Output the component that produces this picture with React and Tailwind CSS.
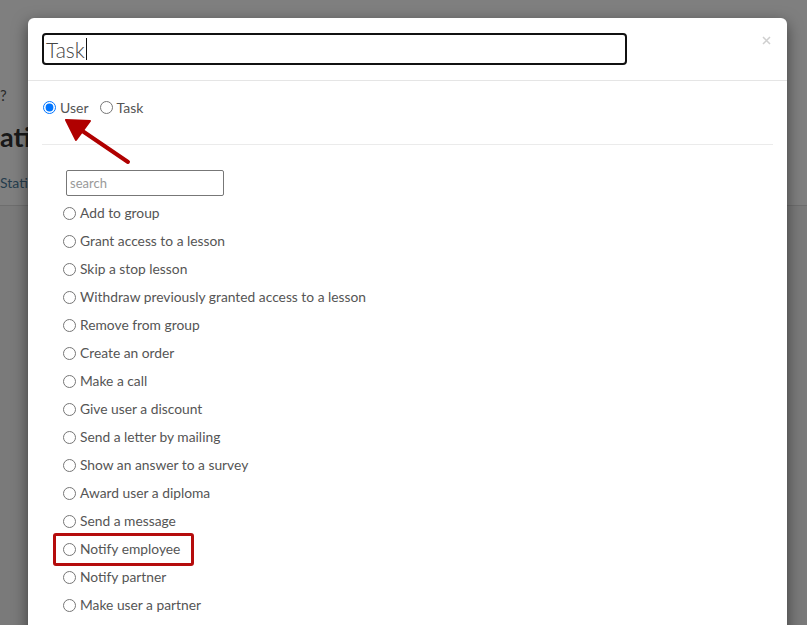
import React from "react";

const actions = [
  "Add to group",
  "Grant access to a lesson",
  "Skip a stop lesson",
  "Withdraw previously granted access to a lesson",
  "Remove from group",
  "Create an order",
  "Make a call",
  "Give user a discount",
  "Send a letter by mailing",
  "Show an answer to a survey",
  "Award user a diploma",
  "Send a message",
  "Notify employee",
  "Notify partner",
  "Make user a partner",
];

function Arrow() {
  return (
    <svg className="absolute left-[50px] top-[104px] pointer-events-none" width="90" height="70" viewBox="0 0 90 70">
      <line x1="78" y1="58" x2="28" y2="24" stroke="#b00000" strokeWidth="4" strokeLinecap="round" />
      <polygon points="16,16 40,17 26,36" fill="#b00000" stroke="#b00000" strokeWidth="2" strokeLinejoin="round" />
    </svg>
  );
}

export default function App() {
  return (
    <div className="relative w-[807px] h-[625px] overflow-hidden bg-[#f4f4f4] font-['Lato',sans-serif]">
      {/* page behind the dialog */}
      <div className="h-[206px] border-b border-[#dcdcdc] bg-white">
        <div className="pt-[84px] ml-0 text-[15px] text-[#555]">?</div>
        <div className="mt-[16px] ml-0 text-[27px] font-bold text-[#333] leading-none">ation</div>
        <div className="mt-[22px] ml-0 text-[14px] text-[#4a7a9a]">Statistics</div>
      </div>

      {/* backdrop */}
      <div className="absolute inset-0 bg-black/50">
        <div className="ml-[28px] mt-[18px] w-[759px] h-[640px] bg-white rounded-t-[6px] shadow-[0_5px_15px_rgba(0,0,0,0.5)]">
          <div className="flex items-start justify-between px-[14px] pt-[15px] pb-[15px] border-b border-[#e5e5e5]">
            <div className="w-[585px] h-[32px] border-2 border-[#111] rounded-[4px] flex items-center px-[2px]">
              <span className="text-[21px] font-light text-[#444] leading-none">Task</span>
              <span className="w-px h-[22px] bg-[#111] ml-px"></span>
            </div>
            <button className="-mt-[1px] mr-[-2px] p-1">
              <svg width="9" height="9" viewBox="0 0 9 9">
                <path d="M1 1 L8 8 M8 1 L1 8" stroke="#cfcfcf" strokeWidth="1.5" />
              </svg>
            </button>
          </div>

          <div className="relative px-[14px]">
            <div className="flex items-center pt-[16px] h-[36px] text-[14px] text-[#555]">
              <label className="flex items-center">
                <input type="radio" name="target" defaultChecked className="m-0 ml-[1px] w-[13px] h-[13px]" />
                <span className="ml-[4px]">User</span>
              </label>
              <label className="flex items-center ml-[11px]">
                <input type="radio" name="target" className="m-0 w-[13px] h-[13px]" />
                <span className="ml-[4px]">Task</span>
              </label>
            </div>
            <div className="mt-[27px] border-t border-[#ebebeb]"></div>

            <div className="pl-[24px] pt-[25px]">
              <input
                type="text"
                placeholder="search"
                className="w-[158px] h-[26px] border border-[#777] rounded-[2px] px-[3px] text-[13px] text-[#333] placeholder:text-[#999] outline-none"
              />
              <div className="mt-[3px] -ml-[3px]">
                {actions.map((a) => (
                  <div key={a} className="relative h-[28px] flex items-center text-[13.8px] text-[#555]">
                    <label className="flex items-center">
                      <input type="radio" name="action" className="m-0 w-[13px] h-[13px]" />
                      <span className="ml-[4px]">{a}</span>
                    </label>
                    {a === "Notify employee" && (
                      <span className="absolute left-[-10px] top-[-2px] w-[141px] h-[33px] border-[3px] border-[#b50c0c] rounded-[3px] pointer-events-none"></span>
                    )}
                  </div>
                ))}
              </div>
            </div>
          </div>
        </div>
      </div>

      <Arrow />
    </div>
  );
}
